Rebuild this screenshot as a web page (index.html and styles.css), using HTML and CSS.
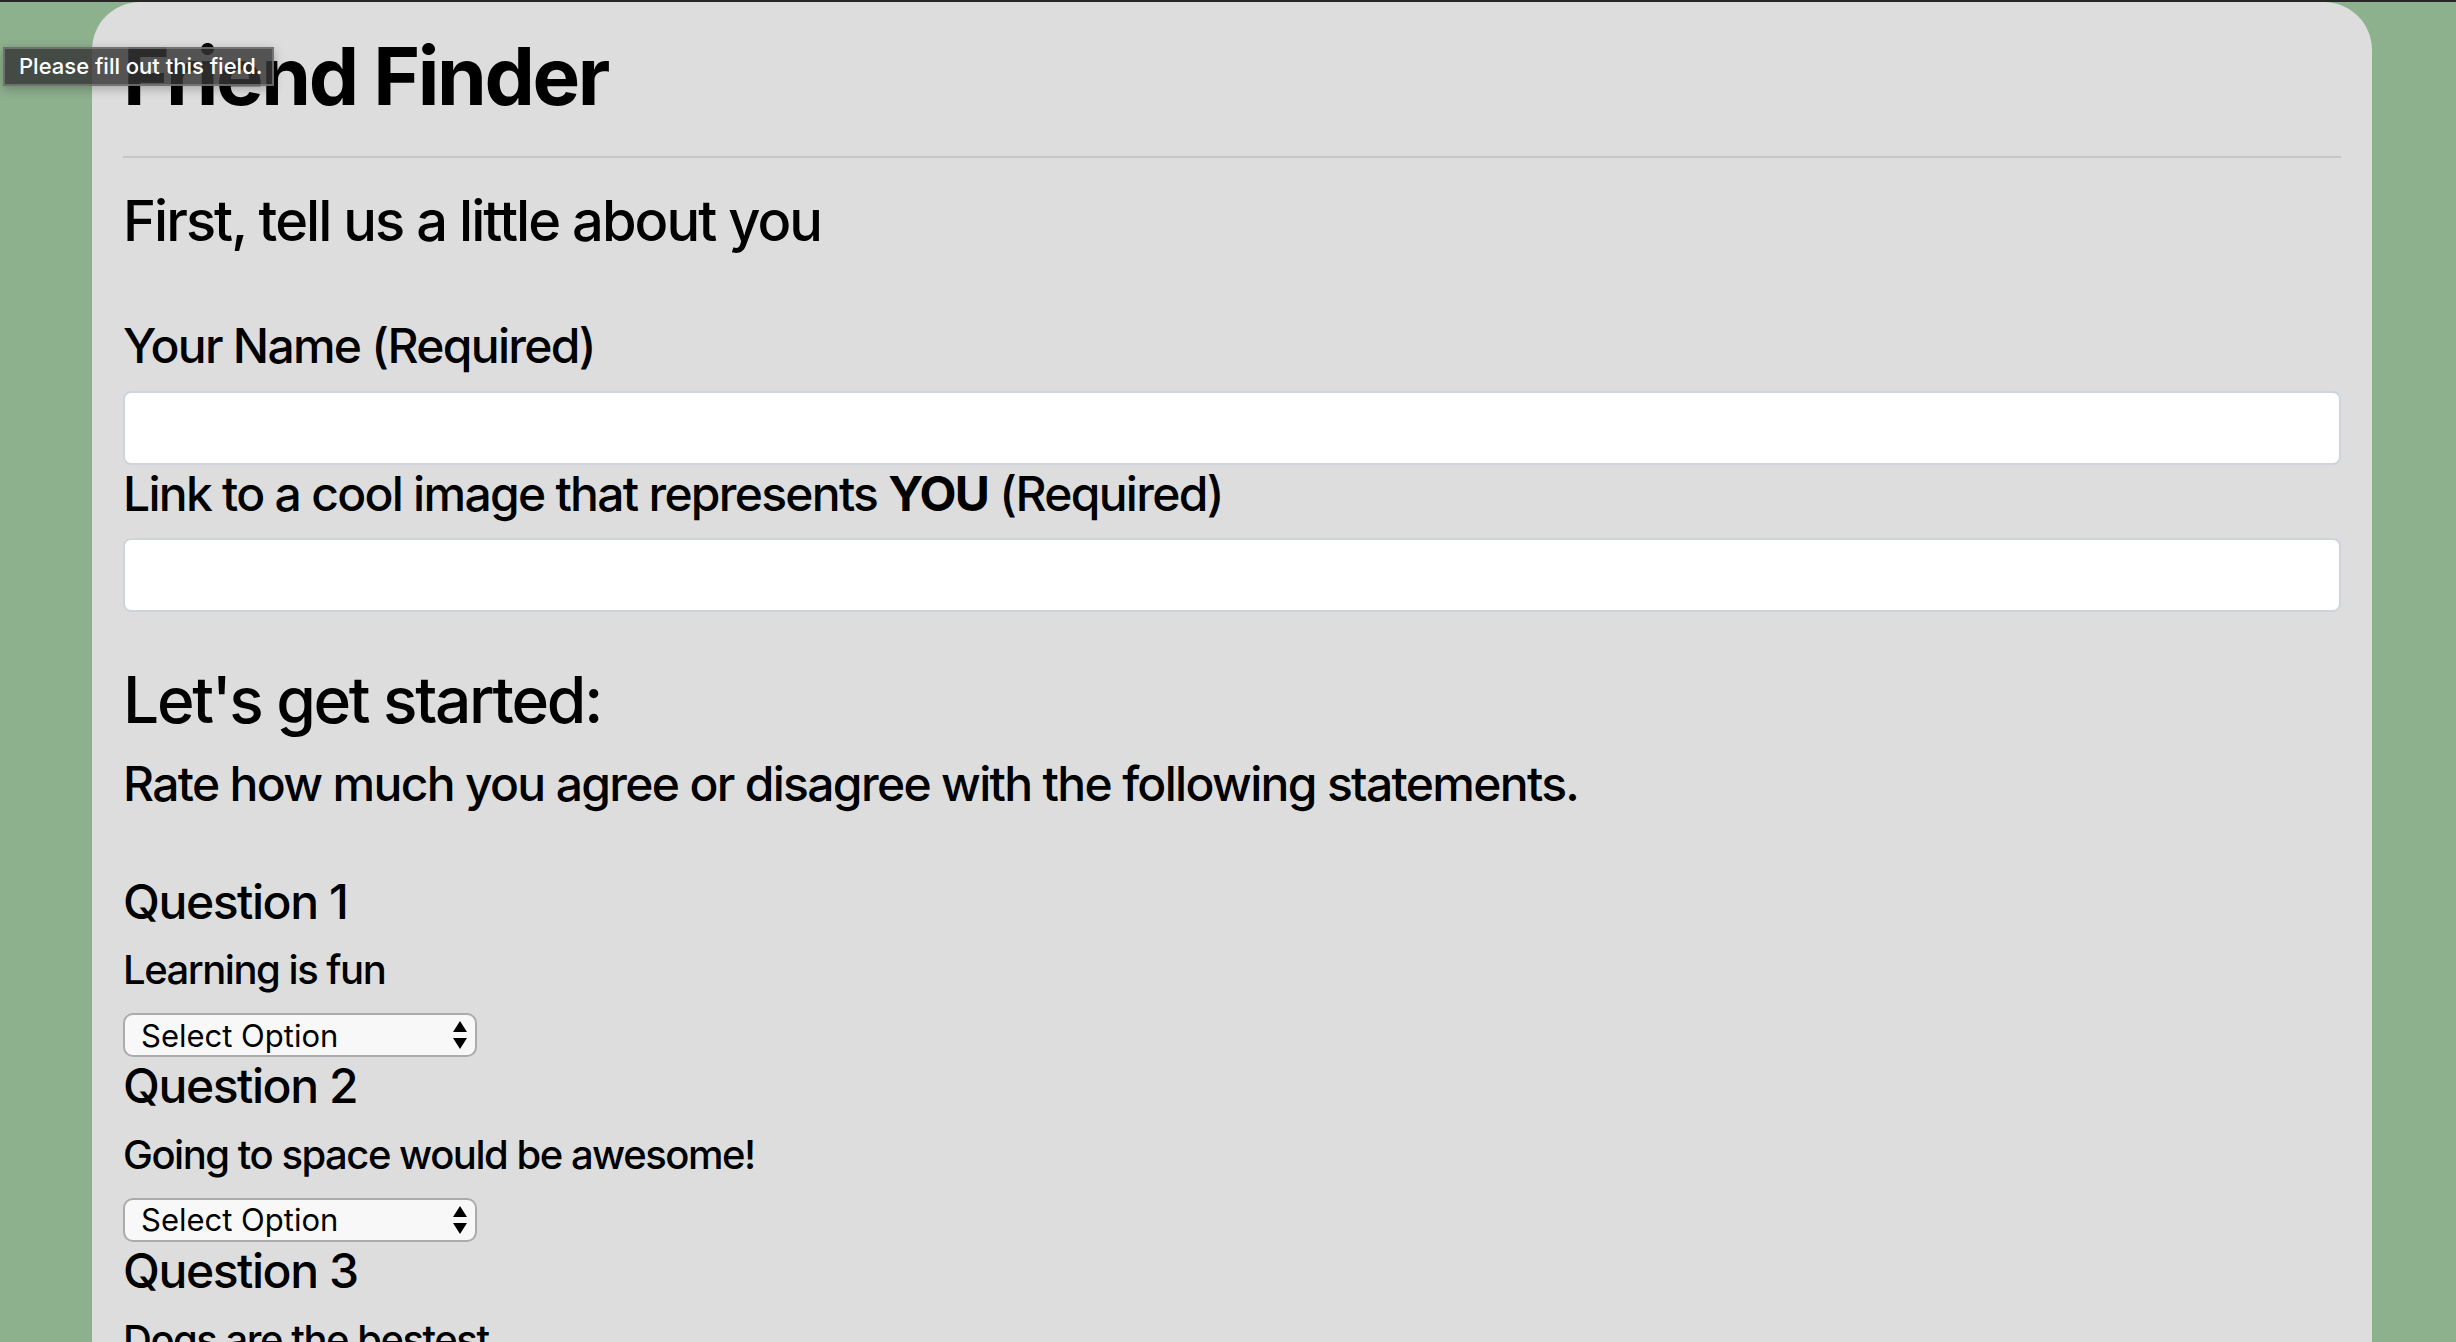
FILE: index.html
```html
<!DOCTYPE html>
<html lang="en">
<head>
<meta charset="utf-8">
<title>Friend Finder</title>
<link rel="stylesheet" href="styles.css">
</head>
<body>
<div class="page">
  <main class="card">
    <h1 class="title">Friend Finder</h1>
    <hr class="divider">
    <h3 class="section-title">First, tell us a little about you</h3>
    <form class="survey">
      <label class="field-label" for="name">Your Name (Required)</label>
      <input class="field-input" id="name" type="text" required>
      <label class="field-label" for="photo">Link to a cool image that represents <b>YOU</b> (Required)</label>
      <input class="field-input last" id="photo" type="text" required>

      <h2 class="start-title">Let's get started:</h2>
      <h4 class="instructions">Rate how much you agree or disagree with the following statements.</h4>

      <div class="question">
        <h4 class="q-title">Question 1</h4>
        <h5 class="q-text">Learning is fun</h5>
        <div class="select-wrap">
          <select class="q-select"><option>Select Option</option><option>1 (Strongly Disagree)</option><option>2</option><option>3</option><option>4</option><option>5 (Strongly Agree)</option></select>
          <svg class="select-arrows" width="14" height="28" viewBox="0 0 14 28"><path d="M7 0 L14 11 L0 11 Z M0 17 L14 17 L7 28 Z" fill="#000"/></svg>
        </div>
      </div>
      <div class="question">
        <h4 class="q-title">Question 2</h4>
        <h5 class="q-text">Going to space would be awesome!</h5>
        <div class="select-wrap">
          <select class="q-select"><option>Select Option</option><option>1 (Strongly Disagree)</option><option>2</option><option>3</option><option>4</option><option>5 (Strongly Agree)</option></select>
          <svg class="select-arrows" width="14" height="28" viewBox="0 0 14 28"><path d="M7 0 L14 11 L0 11 Z M0 17 L14 17 L7 28 Z" fill="#000"/></svg>
        </div>
      </div>
      <div class="question">
        <h4 class="q-title">Question 3</h4>
        <h5 class="q-text">Dogs are the bestest</h5>
        <div class="select-wrap">
          <select class="q-select"><option>Select Option</option><option>1 (Strongly Disagree)</option><option>2</option><option>3</option><option>4</option><option>5 (Strongly Agree)</option></select>
          <svg class="select-arrows" width="14" height="28" viewBox="0 0 14 28"><path d="M7 0 L14 11 L0 11 Z M0 17 L14 17 L7 28 Z" fill="#000"/></svg>
        </div>
      </div>
    </form>
  </main>
  <div class="validation-tip">Please fill out this field.</div>
</div>
</body>
</html>
```
FILE: styles.css
```css
* { box-sizing: border-box; }
html, body { margin: 0; padding: 0; }
html { height: 1342px; overflow: hidden; }
body {
  background: #8db08d;
  border-top: 2px solid #262626;
  font-family: Inter, "Noto Sans", "Liberation Sans", sans-serif;
  color: #000;
  overflow: hidden;
  height: 1342px;
}
.page { position: relative; height: 1340px; overflow: hidden; }
.card {
  margin-left: 92px;
  width: 2280px;
  height: 1340px;
  overflow: hidden;
  background: #dddddd;
  border-radius: 48px 48px 0 0;
  padding: 26px 31px 0 31px;
}
.title {
  font-size: 80px;
  line-height: 1.2;
  font-weight: 700;
  margin: 0 0 16px;
  letter-spacing: -0.03em;
}
.divider {
  margin: 32px 0 16px;
  border: 0;
  border-top: 2px solid rgba(0,0,0,0.1);
  height: 0;
}
.section-title {
  font-size: 56px;
  line-height: 1.2;
  font-weight: 500;
  margin: 30px 0 62px;
  letter-spacing: -0.035em;
}
.survey { display: flex; flex-direction: column; align-items: flex-start; }
.field-label {
  display: block;
  font-size: 48px;
  line-height: 1.2;
  font-weight: 500;
  margin: 0 0 16px;
  letter-spacing: -0.036em;
}
.field-label b { font-weight: 700; }
.field-input {
  display: block;
  width: 100%;
  height: 74px;
  background: #fff;
  border: 2px solid #ced4da;
  border-radius: 8px;
  margin: 0;
  padding: 12px 24px;
  font: inherit;
  font-size: 32px;
}
.field-input.last { margin-bottom: 50px; }
.start-title {
  font-size: 64px;
  line-height: 1.2;
  font-weight: 500;
  margin: 0 0 16px;
  letter-spacing: -0.036em;
}
.instructions {
  font-size: 48px;
  line-height: 1.2;
  font-weight: 500;
  margin: 0 0 60px;
  letter-spacing: -0.035em;
}
.question { display: flex; flex-direction: column; align-items: flex-start; }
.q-title {
  font-size: 48px;
  line-height: 1.2;
  font-weight: 500;
  margin: 0 0 16px;
  letter-spacing: -0.03em;
}
.q-text {
  font-size: 40px;
  line-height: 1.2;
  font-weight: 500;
  margin: 0 0 16px;
  letter-spacing: -0.037em;
}
.select-wrap {
  position: relative;
  margin-top: 3px;
  width: 354px;
  height: 44px;
}
.q-select {
  -webkit-appearance: none;
  appearance: none;
  width: 354px;
  height: 44px;
  background: #f8f8f8;
  border: 2px solid #ababab;
  border-radius: 10px;
  padding: 0 40px 0 16px;
  font-family: Inter, "Noto Sans", "Liberation Sans", sans-serif;
  font-size: 31px;
  color: #000;
  margin: 0;
}
.select-arrows {
  position: absolute;
  right: 10px;
  top: 8px;
  pointer-events: none;
}
.validation-tip {
  position: absolute;
  left: 3px;
  top: 45px;
  width: 271px;
  height: 39px;
  background: rgba(52,52,52,0.82);
  border: 2px solid rgba(130,130,130,0.7);
  color: #fff;
  font-size: 22px;
  font-weight: 500;
  line-height: 35px;
  padding: 0 0 0 14px;
  white-space: nowrap;
  box-shadow: 0 3px 10px rgba(0,0,0,0.25);
}
```
